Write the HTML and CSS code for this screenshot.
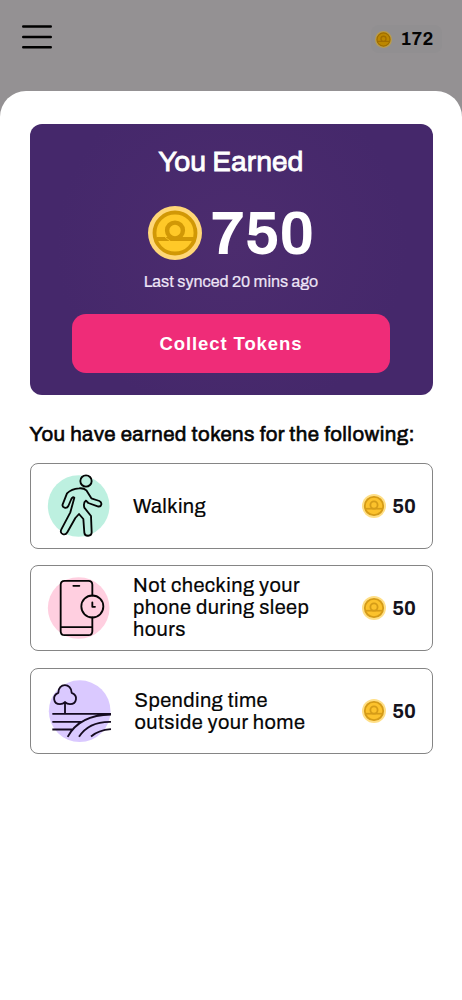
FILE: index.html
```html
<!DOCTYPE html>
<html lang="en">
<head>
<meta charset="utf-8">
<title>Tokens earned</title>
<link rel="stylesheet" href="styles.css">
</head>
<body>
<svg class="defs" width="0" height="0">
  <symbol id="coin" viewBox="0 0 54 54">
    <circle cx="27" cy="27" r="27" fill="#ffd777"/>
    <circle cx="27" cy="27" r="20.5" fill="#ffc928" stroke="#d19806" stroke-width="3.8"/>
    <path d="M9 33H46" fill="none" stroke="#d19806" stroke-width="4"/>
    <circle cx="27" cy="24.500" r="7.900" fill="#ffc928" stroke="#d19806" stroke-width="4.400"/>
    <path d="M17 31.200l5.500 4" stroke="#ffc928" stroke-width=".8"/>
  </symbol>
  <symbol id="coin-small" viewBox="0 0 24 24">
    <circle cx="12" cy="12" r="12" fill="#ffdf86"/>
    <circle cx="12" cy="12" r="9.200" fill="#fcc22c" stroke="#d59c18" stroke-width="1.800"/>
    <path d="M4 14.700H20" stroke="#d59c18" stroke-width="1.700"/>
    <circle cx="12" cy="11" r="3.600" fill="#fcc22c" stroke="#d59c18" stroke-width="1.800"/>
  </symbol>
</svg>
<header class="topbar">
  <svg class="menu" viewBox="0 0 30 24"><path d="M1.2 1.5h27.6M1.2 12h27.6M1.2 22.3h27.6"/></svg>
  <div class="balance"><svg class="coin coin-dim"><use href="#coin-small"/></svg><span>172</span></div>
</header>
<main class="sheet">
  <section class="hero">
    <h1 class="title">You Earned</h1>
    <div class="amount"><svg class="coin-large"><use href="#coin"/></svg><span>750</span></div>
    <p class="synced">Last synced 20 mins ago</p>
    <button class="collect">Collect Tokens</button>
  </section>
  <h2 class="subtitle">You have earned tokens for the following:</h2>
  <ul class="list">
    <li class="row">
      <svg class="pic" viewBox="60 51 204 204">
        <circle cx="161" cy="153" r="92.5" fill="#bdf0e0"/>
        <g class="line">
          <circle cx="183" cy="78" r="17"/>
          <path d="M162 100C147 101 134 107 126 115L113 148C110 158 125 163 130 153L139 132Q143 124 148 128L136 172L109 223C102 236 120 244 127 232L151 189L162 177L175 192L178 233C179 246 200 245 200 232L198 183L178 158Q174 142 183 137L190 144L218 154C230 157 233 143 223 138L199 130L184 106C179 101 171 99 162 100Z"/>
        </g>
      </svg>
      <span class="label">Walking</span>
      <span class="reward"><svg class="coin"><use href="#coin-small"/></svg>50</span>
    </li>
    <li class="row">
      <svg class="pic" viewBox="60 42.5 204 204">
        <circle cx="161" cy="144.500" r="92.5" fill="#ffcfe0"/>
        <g class="line">
          <path d="M202 107V75Q202 63 190 63H119Q107 63 107 75V214Q107 226 119 226H190Q202 226 202 214V173M107 202H202M145 78H163"/>
          <circle cx="202" cy="140" r="33"/>
          <path d="M202 128V141H210"/>
        </g>
      </svg>
      <span class="label phone">Not checking your<br>phone during sleep<br>hours</span>
      <span class="reward"><svg class="coin"><use href="#coin-small"/></svg>50</span>
    </li>
    <li class="row">
      <svg class="pic" viewBox="60 43.5 204 204">
        <circle cx="164" cy="146" r="92.5" fill="#dac9ff"/>
        <g class="line field">
          <path d="M120 154V116M105 125C84 125 81 98 100 91C99 60 140 60 140 91C160 98 156 125 135 125Q126 125 120 119Q114 125 105 125Z"/>
          <path d="M82 154H258M82 178H170M82 201H143M128 223C151 180 192 157 258 156M162 223C181 193 214 177 258 178M198 222Q220 203 258 200"/>
        </g>
      </svg>
      <span class="label outside">Spending time<br>outside your home</span>
      <span class="reward"><svg class="coin"><use href="#coin-small"/></svg>50</span>
    </li>
  </ul>
</main>
</body>
</html>
```
FILE: styles.css
```css
* { box-sizing: border-box; }
body {
  margin: 0;
  min-height: 1000px;
  display: flex;
  flex-direction: column;
  background: #949193;
  font-family: Archivo, "Liberation Sans", Arial, sans-serif;
  color: #050505;
}
.defs { position: absolute; }
.topbar {
  height: 91px;
  padding: 25px 20.5px 0 22px;
  display: flex;
  justify-content: space-between;
  align-items: flex-start;
}
.menu { width: 30px; height: 24px; stroke: #000; stroke-width: 2.4; stroke-linecap: round; }
.balance {
  display: flex;
  align-items: center;
  gap: 8px;
  height: 28px;
  padding: 0 8px 0 4px;
  border-radius: 8px;
  background: #918f91;
  font-size: 18px;
  font-weight: bold;
  letter-spacing: .3px;
}
.coin { width: 24px; height: 24px; }
.coin-dim { width: 17px; height: 17px; filter: brightness(.7) saturate(1.3); }
.sheet {
  flex: 1;
  padding: 33px 29.5px 0;
  background: #fff;
  border-radius: 26px 26px 0 0;
}
.hero {
  height: 271px;
  padding-top: 20px;
  display: flex;
  flex-direction: column;
  align-items: center;
  border-radius: 12px;
  background: radial-gradient(circle at 50% 45%, #4c2c6e, #45286b 70%);
  color: #fff;
}
.title {
  margin: 0;
  font-size: 28px;
  line-height: 36px;
  font-weight: normal;
  letter-spacing: .15px;
  -webkit-text-stroke: .8px;
}
.amount {
  display: flex;
  align-items: center;
  gap: 8px;
  height: 64px;
  margin-top: 21px;
  font-size: 62px;
  font-weight: bold;
  letter-spacing: -.5px;
}
.amount span { width: 104px; transform: scaleX(.95); transform-origin: left; }
.coin-large { width: 54px; height: 54px; }
.synced { margin: 7px 0 0; font-size: 16px; line-height: 20px; color: #eee5f7; -webkit-text-stroke: .2px; }
.collect {
  width: 318px;
  height: 59px;
  margin-top: 22px;
  border: 0;
  border-radius: 14px;
  background: #ef2c78;
  color: #fff;
  font: bold 18.5px "Liberation Sans", Arial, sans-serif;
  letter-spacing: .9px;
}
.subtitle {
  margin: 26px 0 0;
  font-size: 20.5px;
  line-height: 26px;
  font-weight: normal;
  letter-spacing: .42px;
  -webkit-text-stroke: .6px;
  white-space: nowrap;
}
.list {
  list-style: none;
  margin: 16px 0 0;
  padding: 0;
  display: flex;
  flex-direction: column;
  gap: 16.3px;
}
.row {
  display: flex;
  align-items: center;
  height: 86px;
  padding: 0 15.5px 0 14.5px;
  border: 1px solid #858585;
  border-radius: 8px;
}
.pic { width: 68px; height: 68px; flex: none; }
.line { fill: none; stroke: #050505; stroke-width: 5.5; stroke-linecap: round; stroke-linejoin: round; }
.field { stroke: #150b20; stroke-linecap: butt; }
.label { flex: 1; margin-left: 20px; font-size: 20px; line-height: 22px; letter-spacing: .42px; -webkit-text-stroke: .2px; white-space: nowrap; }
.phone { padding-bottom: 3px; }
.outside { margin-left: 21.5px; }
.reward {
  display: flex;
  align-items: center;
  gap: 6px;
  font-size: 20px;
  font-weight: bold;
  color: #15131d;
}
```
